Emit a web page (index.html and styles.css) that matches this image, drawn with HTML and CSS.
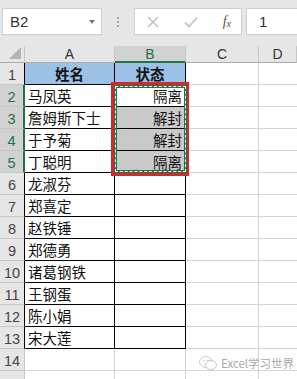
FILE: index.html
```html
<!DOCTYPE html>
<html>
<head>
<meta charset="utf-8">
<link rel="stylesheet" href="styles.css">
</head>
<body>
<div class="fbar">
  <div class="namebox"><span>B2</span><span class="caret"></span></div>
  <div class="dots"><i></i><i></i><i></i></div>
  <div class="fbtns">
    <svg class="ic" width="14" height="14" viewBox="0 0 14 14"><path d="M2 2L12 12M12 2L2 12" stroke="#c4c4c4" stroke-width="1.6" fill="none"/></svg>
    <svg class="ic" width="16" height="14" viewBox="0 0 16 14"><path d="M2 7.5L6 11.5L14 2.5" stroke="#c4c4c4" stroke-width="1.8" fill="none"/></svg>
    <span class="fx">f<sub>x</sub></span>
  </div>
  <div class="fval">1</div>
</div>
<div class="sheet">
  <div class="grid">
    <div class="corner"><span class="tri"></span></div>
    <div class="ch">A</div><div class="ch sel">B</div><div class="ch">C</div><div class="ch last">D</div>

    <div class="rh t">1</div><div class="c ta hd">姓名</div><div class="c tb hd">状态</div><div class="c"></div><div class="c last"></div>
    <div class="rh s">2</div><div class="c ta">马凤英</div><div class="c tb act">隔离</div><div class="c"></div><div class="c last"></div>
    <div class="rh s">3</div><div class="c ta">詹姆斯下士</div><div class="c tb shade">解封</div><div class="c"></div><div class="c last"></div>
    <div class="rh s">4</div><div class="c ta">于予菊</div><div class="c tb shade">解封</div><div class="c"></div><div class="c last"></div>
    <div class="rh s">5</div><div class="c ta">丁聪明</div><div class="c tb shade">隔离</div><div class="c"></div><div class="c last"></div>
    <div class="rh t">6</div><div class="c ta">龙淑芬</div><div class="c tb"></div><div class="c"></div><div class="c last"></div>
    <div class="rh t">7</div><div class="c ta">郑喜定</div><div class="c tb"></div><div class="c"></div><div class="c last"></div>
    <div class="rh t">8</div><div class="c ta">赵铁锤</div><div class="c tb"></div><div class="c"></div><div class="c last"></div>
    <div class="rh t">9</div><div class="c ta">郑德勇</div><div class="c tb"></div><div class="c"></div><div class="c last"></div>
    <div class="rh t">10</div><div class="c ta">诸葛钢铁</div><div class="c tb"></div><div class="c"></div><div class="c last"></div>
    <div class="rh t">11</div><div class="c ta">王钢蛋</div><div class="c tb"></div><div class="c"></div><div class="c last"></div>
    <div class="rh t">12</div><div class="c ta">陈小娟</div><div class="c tb"></div><div class="c"></div><div class="c last"></div>
    <div class="rh t">13</div><div class="c ta">宋大莲</div><div class="c tb"></div><div class="c"></div><div class="c last"></div>
    <div class="rh">14</div><div class="c"></div><div class="c"></div><div class="c"></div><div class="c last"></div>
    <div class="rh"></div><div class="c"></div><div class="c"></div><div class="c"></div><div class="c last"></div>
  </div>
  <div class="redbox"></div>
  <div class="ants"></div>
  <div class="wm">
    <svg width="20" height="16" viewBox="0 0 20 16"><ellipse cx="8" cy="7" rx="6.5" ry="5.5" fill="none" stroke="#c8c8c8" stroke-width="1"/><ellipse cx="13" cy="10" rx="5.5" ry="4.5" fill="#fff" stroke="#c8c8c8" stroke-width="1"/><circle cx="6" cy="5.5" r="0.8" fill="#c8c8c8"/><circle cx="10" cy="5.5" r="0.8" fill="#c8c8c8"/></svg>
    <span>Excel学习世界</span>
  </div>
</div>
</body>
</html>
```
FILE: styles.css
```css
html, body { margin: 0; padding: 0; }
body {
  width: 297px; height: 379px; overflow: hidden;
  background: #e6e6e6;
  font-family: "Liberation Sans", "Noto Sans CJK SC", sans-serif;
  color: #222;
}
.fbar {
  height: 46px; box-sizing: border-box;
  padding: 8px 0 0 2px;
  display: flex; align-items: flex-start;
}
.namebox {
  width: 100px; height: 27px; box-sizing: border-box;
  background: #fff; border: 1px solid #cfcfcf;
  display: flex; align-items: center; justify-content: space-between;
  padding: 0 6px 0 7px; font-size: 15px; color: #333;
}
.caret {
  width: 0; height: 0;
  border-left: 3.5px solid transparent; border-right: 3.5px solid transparent;
  border-top: 4px solid #777;
}
.dots {
  width: 32px; height: 27px;
  display: flex; flex-direction: column; align-items: center; justify-content: center; gap: 2px;
}
.dots i { width: 2px; height: 2px; background: #a8a8a8; display: block; }
.fbtns {
  width: 108px; height: 27px; box-sizing: border-box;
  background: #fff; border: 1px solid #cfcfcf;
  display: flex; align-items: center; justify-content: space-between;
  padding: 0 10px 0 11px;
}
.fx { font-family: "Liberation Serif", serif; font-style: italic; font-size: 14px; color: #555; }
.fx sub { font-size: 10px; vertical-align: -1px; }
.fval {
  margin-left: 4px; flex: 1; height: 27px; box-sizing: border-box;
  background: #fff; border: 1px solid #cfcfcf; border-right: none;
  font-size: 15px; color: #333; padding-left: 12px; line-height: 25px;
}
.sheet { position: relative; background: #fff; }
.grid {
  display: grid;
  grid-template-columns: 25px 90px 71px 73px 1fr;
  grid-template-rows: 17px repeat(15, 22px);
}
.corner {
  background: #e6e6e6; border-right: 1px solid #c6c6c6; border-bottom: 1px solid #ababab;
  box-sizing: border-box; position: relative;
}
.tri {
  position: absolute; right: 3px; bottom: 3px; width: 0; height: 0;
  border-left: 12px solid transparent; border-bottom: 12px solid #b5b5b5;
}
.ch {
  background: #e6e6e6; box-sizing: border-box;
  border-right: 1px solid #c6c6c6; border-bottom: 1px solid #ababab;
  text-align: center; font-size: 14px; line-height: 17px; color: #333;
}
.ch.sel { background: #d2d2d2; color: #217346; border-bottom: 2px solid #217346; }
.rh {
  background: #e6e6e6; box-sizing: border-box;
  border-right: 1px solid #c6c6c6; border-bottom: 1px solid #c6c6c6;
  text-align: center; font-size: 14.5px; line-height: 24px; color: #444;
}
.rh.t { border-right-color: #000; }
.rh.s { background: #d2d2d2; color: #217346; border-right: 2px solid #217346; }
.c {
  box-sizing: border-box; background: #fff;
  border-right: 1px solid #d4d4d4; border-bottom: 1px solid #d4d4d4;
  font-family: "Noto Sans CJK SC", sans-serif; font-size: 14.5px; line-height: 21px;
  color: #111; padding: 0 3px; white-space: nowrap; overflow: hidden;
}
.c.ta, .c.tb { border-right-color: #000; border-bottom-color: #000; }
.c.tb { text-align: right; }
.c.tb.hd, .c.ta.hd { background: #9bc2e6; text-align: center; font-weight: bold; }
.c.shade { background: #c9c9c9; }
.c.last { border-right: none; }
.redbox {
  position: absolute; left: 111px; top: 36px; width: 78px; height: 94px;
  box-sizing: border-box; border: 3px solid #d9252c;
}
.ants {
  position: absolute; left: 114px; top: 39px; width: 73px; height: 88px;
  box-sizing: border-box; border: 3px solid #217346;
}
.ants::after {
  content: ""; position: absolute; inset: -2px;
  border: 1px dashed #fff;
}
.wm {
  position: absolute; left: 198px; top: 309px;
  display: flex; align-items: center; gap: 3px;
  font-family: "Noto Sans CJK SC", sans-serif; font-size: 11.5px; color: #a9a9a9;
}
```
